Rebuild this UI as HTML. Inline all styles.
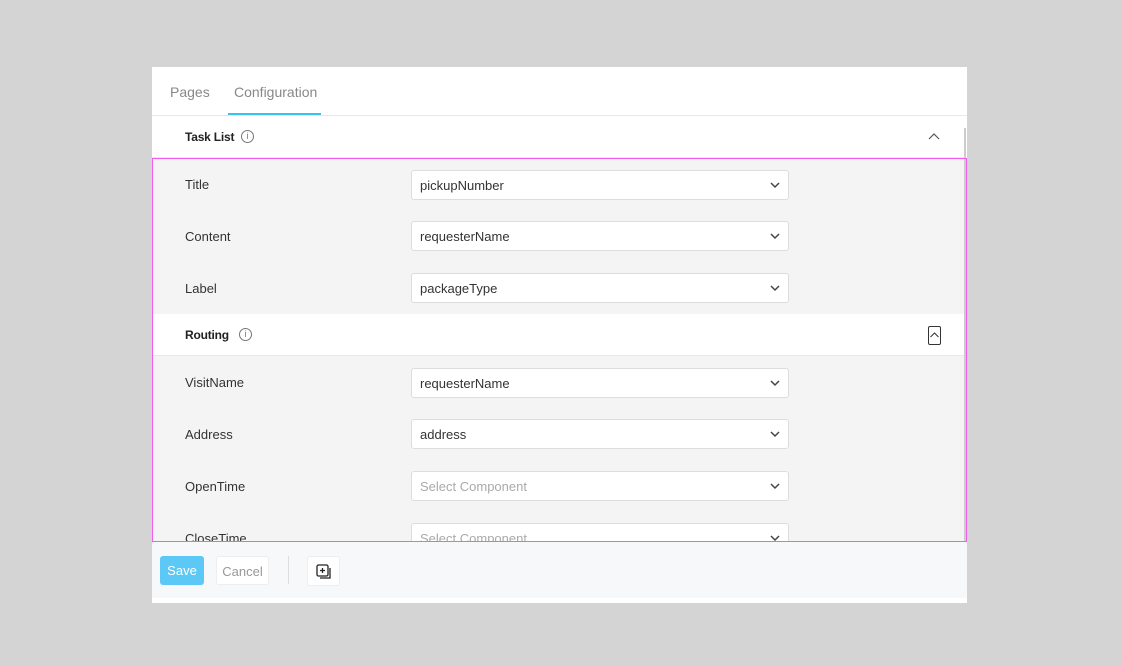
<!DOCTYPE html>
<html><head><style>
*{box-sizing:border-box;margin:0;padding:0}
body{width:1121px;height:665px;background:#d4d4d4;font-family:"Liberation Sans",sans-serif;position:relative;overflow:hidden}
.panel{position:absolute;left:152px;top:67px;width:815px;height:536px;background:#fff}
.tabs{position:absolute;left:0;top:0;width:815px;height:49px;border-bottom:1px solid #e8e8e8}
.tab{position:absolute;top:17px;font-size:14px;color:#888}
.ink{position:absolute;left:76px;top:46px;width:93px;height:2px;background:#3cc0f0}
.scroll{position:absolute;left:0;top:49px;width:815px;height:425px;overflow:hidden}
.hdr{position:absolute;left:0;width:812px;height:42px;background:#fff;border-bottom:1px solid #e8e8e8}
.hdr b{position:absolute;left:33px;top:14px;font-size:12px;color:#222;letter-spacing:-0.2px}
.info{position:absolute;top:14px;width:13px;height:13px;border:1px solid #777;border-radius:50%;font-size:9px;line-height:11px;text-align:center;color:#777;font-style:normal}
.rows{position:absolute;left:0;width:812px;background:#f4f4f4}
.lab{position:absolute;left:33px;font-size:13px;color:#333}
.sel{position:absolute;left:259px;width:378px;height:30px;background:#fff;border:1px solid #ddd;border-radius:3px;font-size:13px;color:#333;padding:7px 0 0 8px}
.sel.ph{color:#aaa}
.sel svg{position:absolute;right:8px;top:11px}
.pink{position:absolute;left:0;top:91px;width:815px;height:384px;border:1.5px solid #f25cf0;pointer-events:none}
.foot{position:absolute;left:0;top:475px;width:815px;height:56px;background:#f7f8fa}
.btn{position:absolute;top:14px;height:29px;border-radius:3px;font-size:13px;text-align:center;line-height:29px}
</style></head><body>
<div class="panel">
 <div class="tabs"><span class="tab" style="left:18px">Pages</span><span class="tab" style="left:82px">Configuration</span><div class="ink"></div></div>
 <div class="scroll">
  <div class="hdr" style="top:0"><b>Task List</b><i class="info" style="left:89px">i</i>
   <svg style="position:absolute;left:776px;top:17px" width="12" height="8"><path d="M1 6 L6 1 L11 6" fill="none" stroke="#555" stroke-width="1.2"/></svg></div>
  <div class="rows" style="top:42px;height:156px">
   <span class="lab" style="top:19px">Title</span><div class="sel" style="top:12px">pickupNumber<svg width="10" height="7"><path d="M1 1 L5 5 L9 1" fill="none" stroke="#444" stroke-width="1.5"/></svg></div>
   <span class="lab" style="top:71px">Content</span><div class="sel" style="top:63px">requesterName<svg width="10" height="7"><path d="M1 1 L5 5 L9 1" fill="none" stroke="#444" stroke-width="1.5"/></svg></div>
   <span class="lab" style="top:123px">Label</span><div class="sel" style="top:115px">packageType<svg width="10" height="7"><path d="M1 1 L5 5 L9 1" fill="none" stroke="#444" stroke-width="1.5"/></svg></div>
  </div>
  <div class="hdr" style="top:198px"><b>Routing</b><i class="info" style="left:87px">i</i>
   <div style="position:absolute;left:776px;top:12px;width:13px;height:19px;border:1.5px solid #333;border-radius:2px"><svg style="position:absolute;left:1px;top:5px" width="9" height="6"><path d="M0.5 5 L4.5 1 L8.5 5" fill="none" stroke="#333" stroke-width="1"/></svg></div></div>
  <div class="rows" style="top:240px;height:200px">
   <span class="lab" style="top:19px">VisitName</span><div class="sel" style="top:12px">requesterName<svg width="10" height="7"><path d="M1 1 L5 5 L9 1" fill="none" stroke="#444" stroke-width="1.5"/></svg></div>
   <span class="lab" style="top:71px">Address</span><div class="sel" style="top:63px">address<svg width="10" height="7"><path d="M1 1 L5 5 L9 1" fill="none" stroke="#444" stroke-width="1.5"/></svg></div>
   <span class="lab" style="top:123px">OpenTime</span><div class="sel ph" style="top:115px">Select Component<svg width="10" height="7"><path d="M1 1 L5 5 L9 1" fill="none" stroke="#444" stroke-width="1.5"/></svg></div>
   <span class="lab" style="top:175px">CloseTime</span><div class="sel ph" style="top:167px">Select Component<svg width="10" height="7"><path d="M1 1 L5 5 L9 1" fill="none" stroke="#444" stroke-width="1.5"/></svg></div>
  </div>
  <div style="position:absolute;left:812px;top:12px;width:2px;height:420px;background:#ccc"></div>
 </div>
 <div class="pink"></div>
 <div class="foot">
  <div class="btn" style="left:8px;width:44px;background:#5bc8f5;color:#fff">Save</div>
  <div class="btn" style="left:64px;width:53px;background:#fff;color:#999;border:1px solid #eee">Cancel</div>
  <div style="position:absolute;left:136px;top:14px;width:1px;height:28px;background:#ddd"></div>
  <div style="position:absolute;left:155px;top:14px;width:33px;height:30px;background:#fff;border:1px solid #eee;border-radius:3px">
   <svg style="position:absolute;left:8px;top:7px" width="17" height="16"><rect x="1" y="1" width="11" height="11" rx="1.5" fill="none" stroke="#222" stroke-width="1.3"/><path d="M4 6.5h5M6.5 4v5" stroke="#222" stroke-width="1.3"/><path d="M14 4v10h-10" fill="none" stroke="#222" stroke-width="1.3"/></svg></div>
 </div>
</div>
</body></html>
